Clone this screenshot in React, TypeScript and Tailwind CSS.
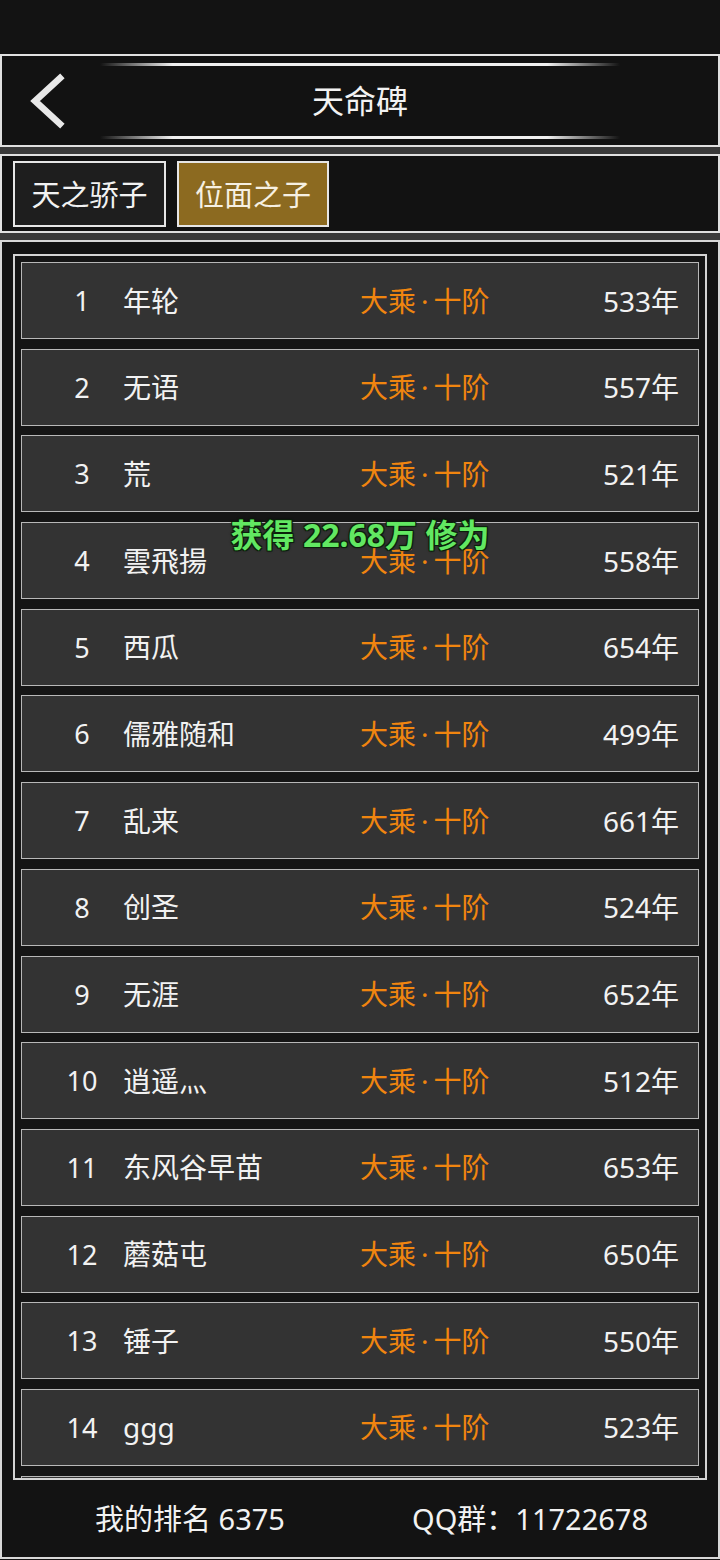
interface Entry {
  rank: number;
  name: string;
  years: number;
}

const entries: Entry[] = [
  { rank: 1, name: "年轮", years: 533 },
  { rank: 2, name: "无语", years: 557 },
  { rank: 3, name: "荒", years: 521 },
  { rank: 4, name: "雲飛揚", years: 558 },
  { rank: 5, name: "西瓜", years: 654 },
  { rank: 6, name: "儒雅随和", years: 499 },
  { rank: 7, name: "乱来", years: 661 },
  { rank: 8, name: "创圣", years: 524 },
  { rank: 9, name: "无涯", years: 652 },
  { rank: 10, name: "逍遥灬", years: 512 },
  { rank: 11, name: "东风谷早苗", years: 653 },
  { rank: 12, name: "蘑菇屯", years: 650 },
  { rank: 13, name: "锤子", years: 550 },
  { rank: 14, name: "ggg", years: 523 },
];

function GlowLine() {
  return (
    <div className="mx-auto h-[3px] w-[520px] bg-[linear-gradient(90deg,transparent,#f0f0f0_14%,#f0f0f0_86%,transparent)]" />
  );
}

function RankRow({ entry }: { entry: Entry }) {
  return (
    <div className="flex h-[77px] shrink-0 items-center border border-[#b8b8b8] bg-[#333333] text-[28px] text-[#f2f2f2]">
      <span className="ml-[20px] w-[80px] text-center text-[27px]">{entry.rank}</span>
      <span className="w-[238px] pl-[1px]">{entry.name}</span>
      <span className="flex-1 text-[#f0850f]">
        大乘<span className="mx-[5px]">·</span>十阶
      </span>
      <span className="pr-[19px]">{entry.years}年</span>
    </div>
  );
}

export default function App() {
  return (
    <div className="relative flex h-[1560px] w-[720px] flex-col overflow-hidden bg-[#131313] font-['Noto_Sans','Noto_Sans_CJK_SC',sans-serif] leading-none text-white">
      {/* status area */}
      <div className="h-[54px] shrink-0" />

      {/* Title bar */}
      <div className="flex h-[93px] shrink-0 flex-col border-2 border-[#e0e0e0] bg-[#121212] pt-[7px] pb-[6px]">
        <GlowLine />
        <div className="grid flex-1 grid-cols-[98px_1fr_98px] items-center">
          <svg width="40" height="56" viewBox="0 0 40 56" className="ml-[24px]">
            <polyline
              points="34,5 9,28 34,51"
              fill="none"
              stroke="#e8e8e8"
              strokeWidth="6.5"
              strokeLinecap="square"
            />
          </svg>
          <h1 className="text-center text-[32px] font-normal text-[#f2f2f2]">天命碑</h1>
          <div />
        </div>
        <GlowLine />
      </div>

      <div className="h-[7px] shrink-0 bg-[#3a3a3a]" />

      {/* Tabs */}
      <div className="flex h-[79px] shrink-0 items-start gap-[11px] border-2 border-[#e0e0e0] bg-[#121212] pt-[5px] pl-[11px]">
        <button className="flex h-[66px] w-[153px] items-center justify-center border-2 border-[#e6e6e6] bg-[#1e1e1e] text-[29px] text-[#f2f2f2]">
          天之骄子
        </button>
        <button className="flex h-[66px] w-[152px] items-center justify-center border-2 border-[#e6e6e6] bg-[#8c6a20] text-[29px] text-[#f6f0e2]">
          位面之子
        </button>
      </div>

      <div className="h-[7px] shrink-0 bg-[#3a3a3a]" />

      {/* Ranking list + footer */}
      <div className="mb-[1px] flex flex-1 flex-col border-2 border-[#d8d8d8] bg-[#131313] px-[11px] pt-[12px]">
        <div className="flex h-[1226px] shrink-0 flex-col gap-[9.7px] overflow-hidden border-2 border-[#d4d4d4] bg-[#151515] px-[6px] pt-[6px]">
          {entries.map((entry) => (
            <RankRow key={entry.rank} entry={entry} />
          ))}
          {/* next row, scrolled just out of view */}
          <div className="h-[77px] shrink-0 border border-[#b8b8b8] bg-[#333333]" />
        </div>
        <div className="flex flex-1 items-center text-[29px] text-[#f2f2f2]">
          <span className="ml-[82px] w-[317px]">我的排名 6375</span>
          <span>QQ群：11722678</span>
        </div>
      </div>

      {/* reward toast */}
      <div className="absolute top-[515px] right-0 left-0 text-center text-[32px] leading-[40px] font-bold text-[#62e862] [text-shadow:1px_1px_0_#0a200a,-1px_-1px_0_#0a200a,1px_-1px_0_#0a200a,-1px_1px_0_#0a200a,0_0_3px_#000]">
        获得 22.68万 修为
      </div>
    </div>
  );
}
